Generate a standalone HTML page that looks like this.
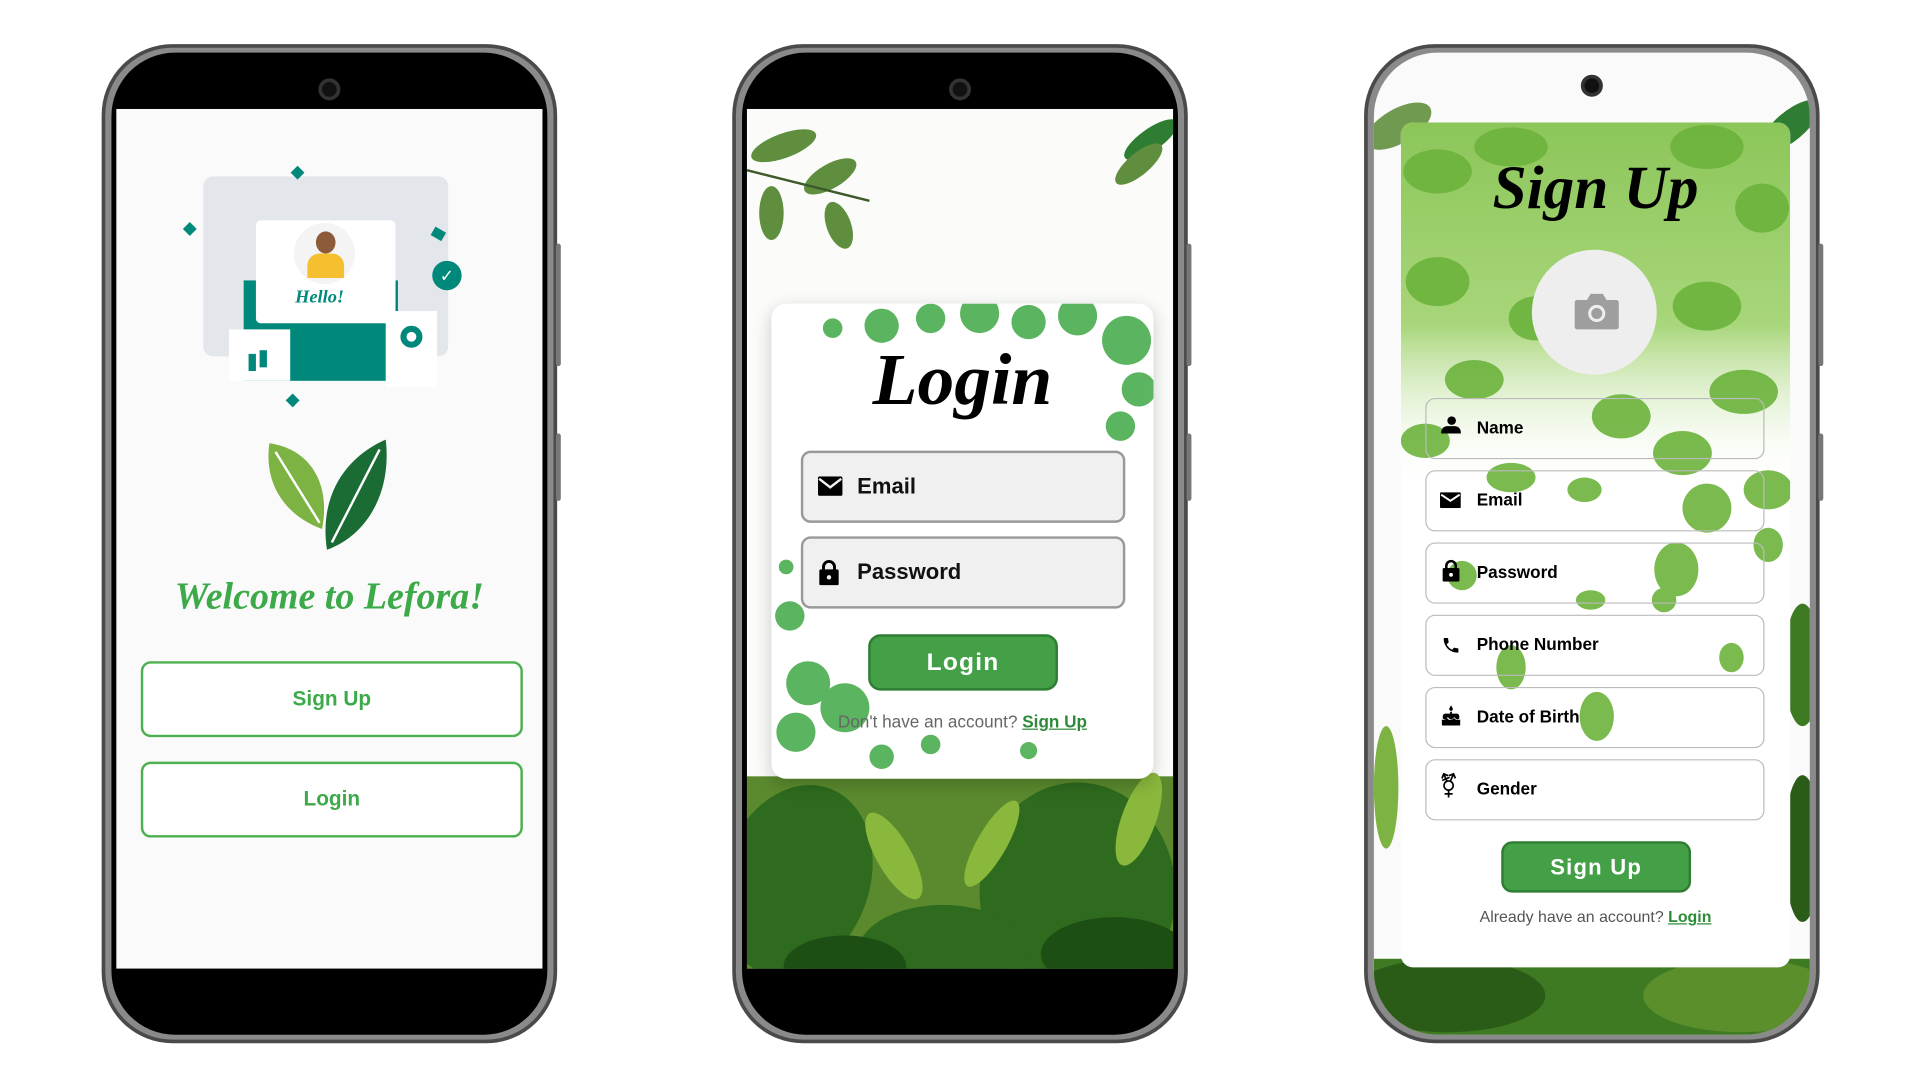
<!DOCTYPE html>
<html><head><meta charset="utf-8">
<style>
*{box-sizing:border-box;margin:0;padding:0}
html,body{width:1920px;height:1080px;overflow:hidden;background:#fff;font-family:"Liberation Sans",sans-serif}
#w{position:absolute;left:0;top:0;width:1568px;height:882px;transform:scale(1.2245);transform-origin:0 0}
.ph{position:absolute;top:36px;width:372px;height:816px;border-radius:58px;background:#8a8a8a;border:3px solid #4a4a4a}
.ph .in{position:absolute;left:5px;top:4px;right:5px;bottom:4px;border-radius:52px;background:#000;overflow:hidden}
.cam{position:absolute;width:18px;height:18px;border-radius:50%;background:#111;border:3px solid #333;left:50%;margin-left:-9px;top:21px;z-index:5}
.scr{position:absolute;left:4px;right:4px;top:46px;bottom:54px;background:#fafafa;overflow:hidden}
.btn1{position:absolute;left:20px;width:312px;height:62px;border:2px solid #4caf50;border-radius:8px;color:#3daa4a;font-size:17px;font-weight:bold;text-align:center;line-height:58px;background:#fff}
.script{font-family:"Liberation Serif",serif;font-style:italic;font-weight:bold}
.fld{position:absolute;border-radius:8px}
.side{position:absolute;right:-6px;width:4px;background:#777;border-radius:2px}
</style></head><body><div id="w">

<!-- Phone 1 -->
<div class="ph" style="left:83px">
<div class="side" style="top:160px;height:100px"></div><div class="side" style="top:315px;height:55px"></div>
<div class="in"><div class="cam"></div>
<div class="scr">
 <div style="position:absolute;left:71px;top:55px;width:200px;height:147px;background:#e3e6ea;border-radius:8px"></div>
 <div style="position:absolute;left:104px;top:140px;width:126px;height:82px;background:#00897b"></div>
 <div style="position:absolute;left:114px;top:91px;width:114px;height:84px;background:#fff;border-radius:4px"></div>
 <div style="position:absolute;left:145px;top:93px;width:50px;height:50px;border-radius:50%;background:#f4f4f4"></div>
 <div style="position:absolute;left:163px;top:100px;width:16px;height:18px;border-radius:50%;background:#8d5a3a"></div>
 <div style="position:absolute;left:156px;top:118px;width:30px;height:20px;border-radius:10px 10px 0 0;background:#f5c030"></div>
 <div class="script" style="position:absolute;left:146px;top:146px;color:#00897b;font-size:15px">Hello!</div>
 <div style="position:absolute;left:92px;top:180px;width:50px;height:42px;background:#fff"></div>
 <div style="position:absolute;left:108px;top:200px;width:6px;height:14px;background:#00897b;box-shadow:9px -3px 0 #00897b"></div>
 <div style="position:absolute;left:220px;top:165px;width:42px;height:62px;background:#fff"></div>
 <div style="position:absolute;left:232px;top:177px;width:18px;height:18px;border-radius:50%;border:5px solid #00897b"></div>
 <div style="position:absolute;left:258px;top:124px;width:24px;height:24px;border-radius:50%;background:#00897b;color:#fff;font-size:14px;text-align:center;line-height:24px">✓</div>
 <div style="position:absolute;left:144px;top:48px;width:8px;height:8px;background:#00897b;transform:rotate(45deg)"></div>
 <div style="position:absolute;left:56px;top:94px;width:8px;height:8px;background:#00897b;transform:rotate(45deg)"></div>
 <div style="position:absolute;left:258px;top:98px;width:10px;height:8px;background:#00897b;transform:rotate(30deg)"></div>
 <div style="position:absolute;left:140px;top:234px;width:8px;height:8px;background:#00897b;transform:rotate(45deg)"></div>
 <svg style="position:absolute;left:120px;top:268px" width="110" height="100" viewBox="0 0 110 100">
  <path d="M5 5 C40 10 55 40 48 75 C20 65 0 40 5 5Z" fill="#7cb342"/>
  <path d="M10 12 L46 70" stroke="#fff" stroke-width="2" fill="none"/>
  <path d="M100 2 C70 15 45 45 52 92 C85 80 105 45 100 2Z" fill="#1b6b34"/>
  <path d="M95 10 L56 86" stroke="#fff" stroke-width="2" fill="none"/>
 </svg>
 <div class="script" style="position:absolute;left:0;width:100%;top:380px;text-align:center;color:#3daa4a;font-size:31px">Welcome to Lefora!</div>
 <div class="btn1" style="top:451px">Sign Up</div>
 <div class="btn1" style="top:533px">Login</div>
</div></div></div>

<!-- Phone 2 -->
<div class="ph" style="left:598px">
<div class="side" style="top:160px;height:100px"></div><div class="side" style="top:315px;height:55px"></div>
<div class="in"><div class="cam"></div>
<div class="scr" style="background:#fbfcfa">
 <svg style="position:absolute;left:0;top:0" width="352" height="706" viewBox="0 0 352 706">
  <g fill="#5f8f3e"><ellipse cx="30" cy="30" rx="28" ry="10" transform="rotate(-20 30 30)"/><ellipse cx="68" cy="55" rx="24" ry="10" transform="rotate(-30 68 55)"/><ellipse cx="75" cy="95" rx="10" ry="20" transform="rotate(-20 75 95)"/><ellipse cx="20" cy="85" rx="10" ry="22"/>
  <ellipse cx="330" cy="25" rx="26" ry="9" transform="rotate(-35 330 25)" fill="#2f7d32"/><ellipse cx="320" cy="45" rx="24" ry="9" transform="rotate(-40 320 45)"/></g>
  <path d="M0 50 L100 75" stroke="#3d5a2a" stroke-width="2"/>
  <rect x="0" y="545" width="352" height="170" fill="#5b8a2e"/>
  <g fill="#2e6b1e"><ellipse cx="40" cy="630" rx="60" ry="80" transform="rotate(20 40 630)"/><ellipse cx="270" cy="640" rx="80" ry="90"/><ellipse cx="160" cy="690" rx="70" ry="40"/></g>
  <g fill="#8ab83c"><ellipse cx="120" cy="610" rx="14" ry="40" transform="rotate(-30 120 610)"/><ellipse cx="200" cy="600" rx="12" ry="40" transform="rotate(30 200 600)"/><ellipse cx="320" cy="580" rx="14" ry="40" transform="rotate(20 320 580)"/></g>
  <g fill="#1d4f14"><ellipse cx="300" cy="690" rx="60" ry="30"/><ellipse cx="80" cy="700" rx="50" ry="25"/></g>
 </svg>
 <div style="position:absolute;left:20px;top:159px;width:312px;height:388px;background:#fff;border-radius:12px;box-shadow:0 4px 14px rgba(0,0,0,.2);overflow:hidden">
  <svg style="position:absolute;left:0;top:0" width="312" height="388"><g fill="#3fa845" opacity=".85">
   <circle cx="90" cy="18" r="14"/><circle cx="130" cy="12" r="12"/><circle cx="170" cy="8" r="16"/><circle cx="210" cy="15" r="14"/><circle cx="250" cy="10" r="16"/><circle cx="290" cy="30" r="20"/><circle cx="300" cy="70" r="14"/><circle cx="285" cy="100" r="12"/><circle cx="50" cy="20" r="8"/>
   <circle cx="15" cy="255" r="12"/><circle cx="30" cy="310" r="18"/><circle cx="60" cy="330" r="20"/><circle cx="20" cy="350" r="16"/><circle cx="90" cy="370" r="10"/><circle cx="130" cy="360" r="8"/><circle cx="210" cy="365" r="7"/><circle cx="12" cy="215" r="6"/></g></svg>
  <div class="script" style="position:absolute;left:0;width:100%;top:28px;text-align:center;font-size:60px;color:#000">Login</div>
  <div class="fld" style="left:24px;top:120px;width:265px;height:59px;background:#f0f0f0;border:2px solid #999"></div>
  <div class="fld" style="left:24px;top:190px;width:265px;height:59px;background:#f0f0f0;border:2px solid #999"></div>
  <svg style="position:absolute;left:38px;top:141px" width="20" height="16" viewBox="0 0 20 16"><rect width="20" height="16" rx="1.5"/><path d="M1 2 L10 9 L19 2" stroke="#f0f0f0" stroke-width="2" fill="none"/></svg>
  <div style="position:absolute;left:70px;top:139px;font-size:18px;font-weight:bold;color:#111">Email</div>
  <svg style="position:absolute;left:39px;top:209px" width="16" height="21" viewBox="0 0 16 21"><path d="M3.5 9V6a4.5 4.5 0 0 1 9 0v3" stroke="#000" stroke-width="2.4" fill="none"/><rect y="8" width="16" height="13" rx="1.5"/><circle cx="8" cy="14.5" r="1.8" fill="#f0f0f0"/></svg>
  <div style="position:absolute;left:70px;top:209px;font-size:18px;font-weight:bold;color:#111">Password</div>
  <div style="position:absolute;left:79px;top:270px;width:155px;height:46px;background:#43a047;border:2px solid #2e7d32;border-radius:10px;color:#fff;font-size:20px;font-weight:bold;text-align:center;line-height:42px;letter-spacing:1px">Login</div>
  <div style="position:absolute;left:0;width:100%;top:333px;text-align:center;font-size:14px;color:#666">Don't have an account? <b style="color:#2e8b3a;text-decoration:underline">Sign Up</b></div>
 </div>
</div></div></div>

<!-- Phone 3 -->
<div class="ph" style="left:1114px">
<div class="side" style="top:160px;height:100px"></div><div class="side" style="top:315px;height:55px"></div>
<div class="in" style="background:#fafafa">
 <svg style="position:absolute;left:0;top:0" width="362" height="808"><g>
  <ellipse cx="20" cy="60" rx="30" ry="14" fill="#6f9a50" transform="rotate(-30 20 60)"/><ellipse cx="340" cy="60" rx="30" ry="12" fill="#2f7d32" transform="rotate(-40 340 60)"/>
  <rect x="0" y="740" width="362" height="70" fill="#3d7a22"/><ellipse cx="60" cy="770" rx="80" ry="30" fill="#2a5c17"/><ellipse cx="300" cy="770" rx="80" ry="30" fill="#5a8f2c"/>
  <ellipse cx="350" cy="500" rx="15" ry="50" fill="#3d7a22"/><ellipse cx="350" cy="650" rx="15" ry="60" fill="#2a5c17"/><ellipse cx="10" cy="600" rx="10" ry="50" fill="#7cb342"/></g></svg>
 <div class="cam" style="top:18px"></div>
 <div style="position:absolute;left:22px;top:57px;width:318px;height:690px;background:#fff;border-radius:10px;overflow:hidden">
  <svg style="position:absolute;left:0;top:0" width="318" height="690"><defs><linearGradient id="g" x1="0" y1="0" x2="0" y2="1"><stop offset="0" stop-color="#8cc65a"/><stop offset=".55" stop-color="#a8d67a"/><stop offset="1" stop-color="#fff" stop-opacity="0"/></linearGradient></defs>
   <rect width="318" height="300" fill="url(#g)"/>
   <g fill="#6cb33c" opacity=".9">
   <ellipse cx="30" cy="40" rx="28" ry="18"/><ellipse cx="90" cy="20" rx="30" ry="16"/><ellipse cx="250" cy="20" rx="30" ry="18"/><ellipse cx="295" cy="70" rx="22" ry="20"/><ellipse cx="30" cy="130" rx="26" ry="20"/><ellipse cx="110" cy="160" rx="22" ry="18"/><ellipse cx="250" cy="150" rx="28" ry="20"/><ellipse cx="60" cy="210" rx="24" ry="16"/><ellipse cx="280" cy="220" rx="28" ry="18"/><ellipse cx="180" cy="240" rx="24" ry="18"/><ellipse cx="20" cy="260" rx="20" ry="14"/><ellipse cx="230" cy="270" rx="24" ry="18"/><ellipse cx="90" cy="290" rx="20" ry="12"/><ellipse cx="300" cy="300" rx="20" ry="16"/>
   <ellipse cx="250" cy="315" rx="20" ry="20"/><ellipse cx="225" cy="365" rx="18" ry="22"/><ellipse cx="150" cy="300" rx="14" ry="10"/><ellipse cx="50" cy="370" rx="12" ry="12"/><ellipse cx="300" cy="345" rx="12" ry="14"/><ellipse cx="155" cy="390" rx="12" ry="8"/><ellipse cx="90" cy="445" rx="12" ry="18"/><ellipse cx="160" cy="485" rx="14" ry="20"/><ellipse cx="270" cy="437" rx="10" ry="12"/><ellipse cx="215" cy="390" rx="10" ry="10"/></g></svg>
  <div class="script" style="position:absolute;left:0;width:100%;top:24px;text-align:center;font-size:50px;color:#000">Sign Up</div>
  <div style="position:absolute;left:107px;top:104px;width:102px;height:102px;border-radius:50%;background:#eee"></div>
  <svg style="position:absolute;left:141px;top:138px" width="38" height="32" viewBox="0 0 38 32"><path d="M3 7h8l3-5h10l3 5h8a2 2 0 0 1 2 2v20a2 2 0 0 1-2 2H3a2 2 0 0 1-2-2V9a2 2 0 0 1 2-2z" fill="#9e9e9e"/><circle cx="19" cy="18" r="7" fill="#eee"/><circle cx="19" cy="18" r="4.5" fill="#9e9e9e"/></svg>
  <div class="fld" style="left:20px;top:225px;width:277px;height:50px;border:1px solid #bbb"></div>
  <div class="fld" style="left:20px;top:284px;width:277px;height:50px;border:1px solid #bbb"></div>
  <div class="fld" style="left:20px;top:343px;width:277px;height:50px;border:1px solid #bbb"></div>
  <div class="fld" style="left:20px;top:402px;width:277px;height:50px;border:1px solid #bbb"></div>
  <div class="fld" style="left:20px;top:461px;width:277px;height:50px;border:1px solid #bbb"></div>
  <div class="fld" style="left:20px;top:520px;width:277px;height:50px;border:1px solid #bbb"></div>
  <div style="position:absolute;left:33px;top:240px;width:16px;height:16px"><div style="width:7px;height:7px;border-radius:50%;background:#000;margin-left:5px"></div><div style="width:16px;height:6px;border-radius:5px 5px 0 0;background:#000;margin-top:1px"></div></div>
  <svg style="position:absolute;left:32px;top:302px" width="17" height="13"><rect width="17" height="13" rx="1"/><path d="M1 2l7.5 5 7.5-5" stroke="#fff" stroke-width="1.6" fill="none"/></svg>
  <svg style="position:absolute;left:34px;top:357px" width="14" height="18" viewBox="0 0 16 21"><path d="M3.5 9V6a4.5 4.5 0 0 1 9 0v3" stroke="#000" stroke-width="2.4" fill="none"/><rect y="8" width="16" height="13" rx="1.5"/><circle cx="8" cy="14.5" r="1.8" fill="#fff"/></svg>
  <svg style="position:absolute;left:33px;top:419px" width="16" height="16" viewBox="0 0 24 24"><path d="M6.6 10.8c1.4 2.8 3.8 5.1 6.6 6.6l2.2-2.2c.3-.3.7-.4 1-.2 1.1.4 2.3.6 3.6.6.6 0 1 .4 1 1V20c0 .6-.4 1-1 1C10.6 21 3 13.4 3 4c0-.6.4-1 1-1h3.5c.6 0 1 .4 1 1 0 1.3.2 2.5.6 3.6.1.3 0 .7-.2 1z"/></svg>
  <svg style="position:absolute;left:32px;top:476px" width="18" height="18" viewBox="0 0 24 24"><path d="M12 6c1.1 0 2-.9 2-2 0-.4-.1-.7-.3-1L12 0l-1.7 3c-.2.3-.3.6-.3 1 0 1.1.9 2 2 2zm6 3h-5V7h-2v2H6c-1.7 0-3 1.3-3 3v1.5c0 1.1.9 2 2 2 .5 0 1-.2 1.4-.6L8.5 12.8l2.1 2.1c.7.7 2.1.7 2.8 0l2.1-2.1 2.1 2.1c.4.4.9.6 1.4.6 1.1 0 2-.9 2-2V12c0-1.7-1.3-3-3-3zm1 7c-1 0-2-.4-2.7-1.1l-1.1-1.1-1.1 1.1c-1.5 1.5-4 1.5-5.5 0l-1.1-1.1-1 1.1C6 15.6 5 16 4 16c-.8 0-1.5-.2-2-.7V21c0 .6.4 1 1 1h18c.6 0 1-.4 1-1v-5.7c-.6.5-1.3.7-2 .7z"/></svg>
  <div style="position:absolute;left:31px;top:533px;font-size:19px;line-height:20px;color:#000">⚧</div>
  <div style="position:absolute;left:62px;top:241px;font-size:14px;font-weight:bold;line-height:17px">
   <div style="height:59px">Name</div><div style="height:59px">Email</div><div style="height:59px">Password</div><div style="height:59px">Phone Number</div><div style="height:59px">Date of Birth</div><div>Gender</div></div>
  <div style="position:absolute;left:82px;top:587px;width:155px;height:42px;background:#43a047;border:2px solid #2e7d32;border-radius:9px;color:#fff;font-size:18px;font-weight:bold;text-align:center;line-height:38px;letter-spacing:1px">Sign Up</div>
  <div style="position:absolute;left:0;width:100%;top:641px;text-align:center;font-size:13px;color:#555">Already have an account? <b style="color:#2e8b3a;text-decoration:underline">Login</b></div>
 </div>
</div></div>

</div></body></html>
